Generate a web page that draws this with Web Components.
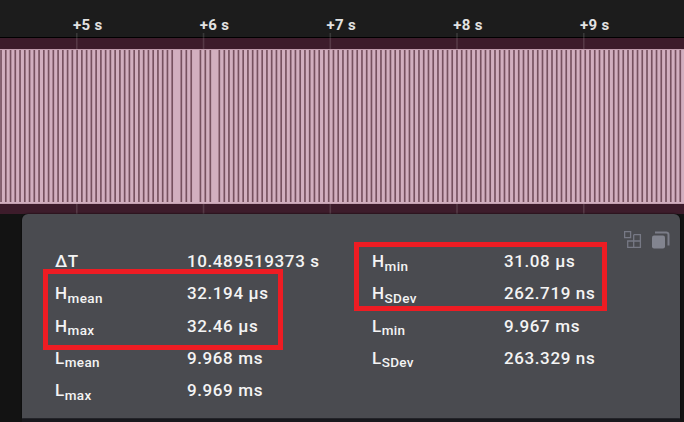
<!DOCTYPE html>
<html lang="en"><head><meta charset="utf-8"><title>Signal measurements</title>
<style>body{margin:0;background:#131313;font-family:Roboto,sans-serif;overflow:hidden}</style></head><body>
<measure-app></measure-app>
<script>
const define=(name,html,init)=>customElements.define(name,class extends HTMLElement{
  constructor(){super();this.attachShadow({mode:'open'}).innerHTML=html;}
  connectedCallback(){if(init)init(this,this.shadowRoot);}
});

define('time-ruler',`<style>
:host{display:grid;grid-template-columns:repeat(5,126.75px);height:38px;box-sizing:border-box;padding-left:73px;background:#1c1c1c;border-bottom:1px solid #000;color:#e2e2e2;font-size:15px;line-height:17px;font-weight:700;letter-spacing:.3px}
span{padding-top:17px;white-space:nowrap}
</style><span>+5 s</span><span>+6 s</span><span>+7 s</span><span>+8 s</span><span>+9 s</span>`);

define('pulse-wave',`<style>:host{display:block;height:176px;background:#3d1c2b}svg{display:block;overflow:visible}</style>
<svg width="684" height="176" viewBox="0 38 684 176"><g class="ticks" fill="#fff"></g>
<rect y="49" width="684" height="155" fill="#d2afbf"/><rect y="49" width="684" height="1" fill="#c09cac"/><g class="gaps" fill="#76515f"></g><rect y="203" width="684" height="1" fill="#c3a0b0"/></svg>`,
(el,root)=>{
  const xs=[];
  for(let i=0;i<37;i++)xs.push(.2+4.755*i);
  xs.push(180.5,185.5,190.4,199.6,204.5,209.5,218.5,223.5);
  for(let i=0;i<97;i++)xs.push(228.1+4.751*i);
  root.querySelector('.gaps').innerHTML=xs.map(x=>`<rect x="${x.toFixed(2)}" y="50" width="1.65" height="152"/>`).join('');
  root.querySelector('.ticks').innerHTML=[76,202.75,329.5,456.2,583].map(x=>`<rect x="${x}" y="33" width="1.6" height="16" opacity=".13"/><rect x="${x}" y="204" width="1.6" height="10" opacity=".13"/>`).join('');
});

define('stat-row',`<style>
:host{display:grid;grid-template-columns:131.9px auto;height:32.25px;line-height:32.25px;white-space:nowrap;color:#f4f4f4;font-size:17px;font-weight:500;letter-spacing:.63px}
.name{letter-spacing:.5px}
i{font-style:normal;font-size:13.5px;letter-spacing:.35px;position:relative;top:3.5px}
</style><span class="name"><span class="base"></span><i></i></span><span><slot></slot></span>`,
(el,root)=>{root.querySelector('.base').textContent=el.getAttribute('base');root.querySelector('i').textContent=el.getAttribute('sub')||'';});

define('panel-tools',`<style>:host{display:block;width:46px;height:18px}svg{display:block}</style>
<svg width="46" height="18" viewBox="0 0 46 18"><g fill="none" stroke="#777985" stroke-width="1.3"><path d="M.6.6h6v6h-6zM9.7 3.7h6.7v12.7H3.7V10h12.7M9.7 3.7v12.7"/></g>
<rect x="28" y="4.5" width="13" height="13" rx="2" fill="#82848f"/><path d="M31 1.4h11.2a2.3 2.3 0 0 1 2.3 2.3V14.5" fill="none" stroke="#7b7d88" stroke-width="2"/></svg>`);

define('stats-panel',`<style>
:host{display:grid;grid-template-columns:317px 1fr;box-sizing:border-box;width:658px;height:204px;margin-left:22px;padding:31px 0 0 33px;position:relative;background:#4a4b50;border-radius:6px 6px 0 0;box-shadow:0 0 2px #000,0 1px 0 #303138,0 4px 0 #19191e}
panel-tools{position:absolute;right:10px;top:17px}
</style><div><slot name="left"></slot></div><div><slot name="right"></slot></div><panel-tools></panel-tools>`);

define('mark-box',`<style>:host{display:block;position:absolute;box-sizing:border-box;border:5px solid #ee1c23}</style>`);

define('measure-app',`<style>
:host{display:block;position:relative;width:684px;height:422px;overflow:hidden;background:#131313}
.one{left:43px;top:269px;width:240px;height:81px}.two{left:354px;top:242px;width:253px;height:69px}
</style><time-ruler></time-ruler><pulse-wave></pulse-wave>
<stats-panel><div slot="left"><stat-row base="ΔT">10.489519373 s</stat-row><stat-row base="H" sub="mean">32.194 µs</stat-row><stat-row base="H" sub="max">32.46 µs</stat-row><stat-row base="L" sub="mean">9.968 ms</stat-row><stat-row base="L" sub="max">9.969 ms</stat-row></div>
<div slot="right"><stat-row base="H" sub="min">31.08 µs</stat-row><stat-row base="H" sub="SDev">262.719 ns</stat-row><stat-row base="L" sub="min">9.967 ms</stat-row><stat-row base="L" sub="SDev">263.329 ns</stat-row></div></stats-panel>
<mark-box class="one"></mark-box><mark-box class="two"></mark-box>`);
</script></body></html>
